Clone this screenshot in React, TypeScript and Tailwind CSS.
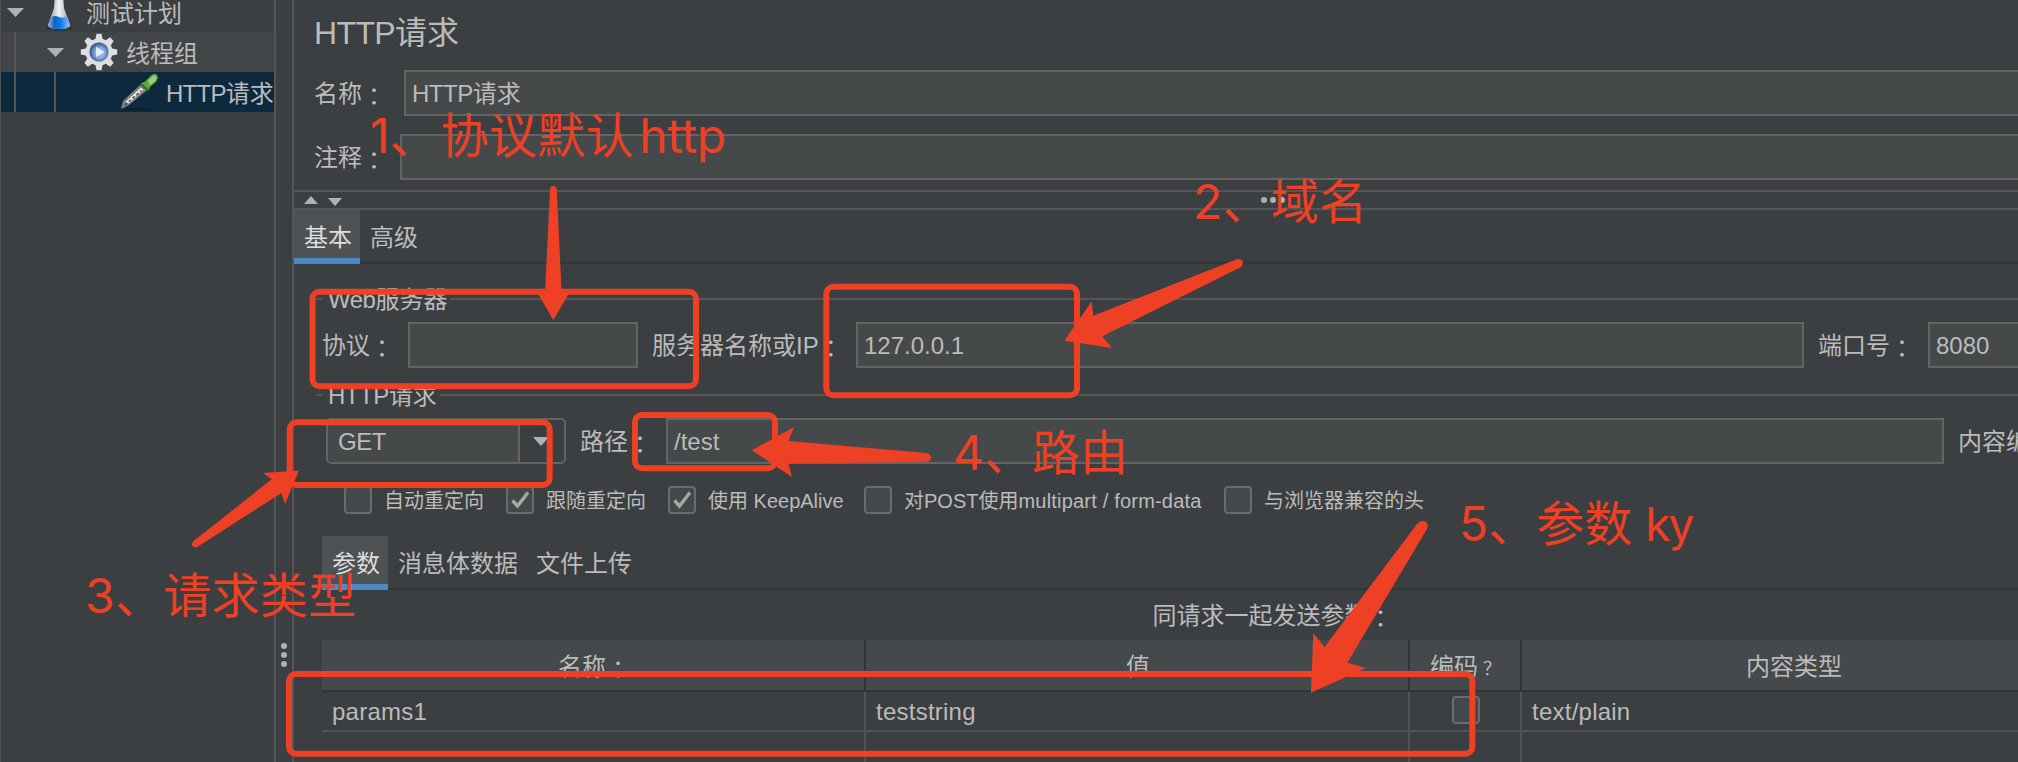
import type { ReactNode } from 'react';

const RED = '#ed4024';

function Colon() {
  return <span className="inline-block translate-x-[6px] translate-y-[2px]">：</span>;
}

function Latin({ children }: { children: ReactNode }) {
  return <span className="tracking-[-0.02em]">{children}</span>;
}

function Triangle({ up = false, className }: { up?: boolean; className: string }) {
  return (
    <svg viewBox="0 0 16 8" preserveAspectRatio="none" className={className}>
      <path d={up ? 'M8 0 16 8H0Z' : 'M0 0H16L8 8Z'} fill="#afb1b3" />
    </svg>
  );
}

function FlaskIcon() {
  return (
    <svg viewBox="0 0 28 36" className="h-9 w-7">
      <defs>
        <linearGradient id="glass" x1="0" x2="1">
          <stop offset="0" stopColor="#8c8f93" />
          <stop offset="0.5" stopColor="#f4f4f4" />
          <stop offset="1" stopColor="#999ba0" />
        </linearGradient>
        <linearGradient id="liquid" x1="0" x2="1">
          <stop offset="0" stopColor="#9db9e8" />
          <stop offset="0.3" stopColor="#0f62c8" />
          <stop offset="0.6" stopColor="#0a7df0" />
          <stop offset="1" stopColor="#9fbdf0" />
        </linearGradient>
      </defs>
      <ellipse cx="14" cy="34" rx="13.5" ry="1.8" fill="#2e3133" />
      <path d="M10 0H18L19 14L25 31Q25 35 14 35Q3 35 3 31L9 14Z" fill="url(#glass)" />
      <path d="M6.5 23Q10 21 14 23Q18 25 22 22L25 31Q25 35 14 35Q3 35 3 31Z" fill="url(#liquid)" />
    </svg>
  );
}

function GearIcon() {
  return (
    <svg viewBox="0 0 38 38" className="h-[38px] w-[38px]">
      <defs>
        <radialGradient id="gearCore" cx="0.55" cy="0.55" r="0.6">
          <stop offset="0" stopColor="#c9d8ec" />
          <stop offset="0.5" stopColor="#7f9fd0" />
          <stop offset="1" stopColor="#1c3f86" />
        </radialGradient>
      </defs>
      <g fill="#dedede">
        {[0, 45, 90, 135].map((a) => (
          <path key={a} d="M16.5 0.8H21.5L23 8V30L21.5 37.2H16.5L15 30V8Z" transform={`rotate(${a} 19 19)`} />
        ))}
        <circle cx="19" cy="19" r="13.5" />
      </g>
      <circle cx="19" cy="19" r="10.3" fill="#c9cdd4" />
      <circle cx="19" cy="19" r="9.5" fill="url(#gearCore)" />
      <path d="M16 13.5 24.5 19 16 24Z" fill="#eef2f8" fillOpacity="0.85" />
    </svg>
  );
}

function DropperIcon() {
  return (
    <svg viewBox="0 0 40 38" className="h-[38px] w-10">
      <ellipse cx="20" cy="36.5" rx="14" ry="1.5" fill="#0a2133" />
      <path d="M1 35 3 28 20 12 26 18 9 32 2.5 35.5Z" fill="#7f7f7f" />
      <path d="M5.5 29 21 14.5 23.5 17 8.5 30.5Z" fill="#ededed" />
      <path d="M5 32 21.5 17.5" stroke="#4b4b4b" strokeWidth="1.5" strokeDasharray="3 2" />
      <path d="M21 10 24.5 9 31 2.5Q35 0 37 2Q39 5 36 9L30 14 28.5 17.5 25 18 20.5 13Z" fill="#5fa544" />
      <path d="M28 7.5 33 3Q36 2 36.5 4.5Q36 8 33 9.5L30 12Z" fill="#93d47a" />
      <path d="M21 11 28 17.5" stroke="#2f6b25" strokeWidth="2" />
    </svg>
  );
}

function Input({ className, children }: { className: string; children?: ReactNode }) {
  return (
    <div className={`flex h-[46px] shrink-0 items-center border-2 border-[#646464] bg-[#45494a] pt-[2px] pl-[6px] ${className}`}>
      {children}
    </div>
  );
}

function Label({ className, children }: { className: string; children: ReactNode }) {
  return (
    <span className={`shrink-0 pt-[2px] ${className}`}>
      {children}
      <Colon />
    </span>
  );
}

function Box({ checked = false }: { checked?: boolean }) {
  return (
    <span className="flex size-7 shrink-0 items-center justify-center rounded-[4px] border-2 border-[#6b6b6b] bg-[#43494a]">
      {checked && (
        <svg viewBox="0 0 24 24" className="size-6">
          <path d="M4.5 12.5 9.5 18 20 4.5" fill="none" stroke="#a7a7a7" strokeWidth="3.4" />
        </svg>
      )}
    </span>
  );
}

function Option({ label, checked, className }: { label: ReactNode; checked?: boolean; className: string }) {
  return (
    <div className={`flex h-7 shrink-0 items-center gap-[12px] text-[20px] ${className}`}>
      <Box checked={checked} />
      <span className="pt-[2px] whitespace-nowrap">{label}</span>
    </div>
  );
}

function Tabs({ items, className }: { items: string[]; className: string }) {
  return (
    <div className={`flex h-[54px] shrink-0 items-stretch bg-[linear-gradient(#323537,#323537)] bg-[length:100%_2px] bg-bottom bg-no-repeat ${className}`}>
      {items.map((t, i) => (
        <div
          key={t}
          className={
            i === 0
              ? 'flex items-center border-b-[6px] border-[#4a88c7] bg-[#4e5254] pt-[8px] pr-[8px] pl-[10px] text-[#dedede]'
              : 'flex items-center pt-[2px] pr-[8px] pl-[10px]'
          }
        >
          {t}
        </div>
      ))}
    </div>
  );
}

function Group({ title, className, children }: { title: ReactNode; className: string; children: ReactNode }) {
  return (
    <section className={className}>
      <div className="flex h-7 items-center pl-[22px] whitespace-nowrap">
        <span className="mr-[6px] h-[2px] w-[6px] bg-[#555555]" />
        <span className="pt-[2px]">{title}</span>
        <span className="ml-[3px] h-[2px] flex-1 bg-[#555555]" />
      </div>
      {children}
    </section>
  );
}

function Dots({ className }: { className: string }) {
  return (
    <div className={`flex gap-[3px] ${className}`}>
      <span className="size-[6px] rounded-full bg-[#afb1b3]" />
      <span className="size-[6px] rounded-full bg-[#afb1b3]" />
      <span className="size-[6px] rounded-full bg-[#afb1b3]" />
    </div>
  );
}

function Sidebar() {
  return (
    <aside className="flex h-full w-[276px] shrink-0 flex-col overflow-hidden border-r-2 border-l border-r-[#555555] border-l-[#515151] whitespace-nowrap">
      <div className="-mt-2 flex h-10 shrink-0 items-center pl-[6px]">
        <Triangle className="h-[9px] w-[17px]" />
        <span className="ml-[21px]"><FlaskIcon /></span>
        <span className="mt-[3px] ml-[13px]">测试计划</span>
      </div>
      <div className="flex h-10 shrink-0 items-center bg-[#424547]">
        <span className="ml-[13px] h-10 w-[2px] bg-[#555555]" />
        <Triangle className="ml-[31px] h-[9px] w-[17px]" />
        <span className="ml-[16px]"><GearIcon /></span>
        <span className="ml-[8px] pt-[3px]">线程组</span>
      </div>
      <div className="flex h-10 shrink-0 items-center bg-[#0d293e]">
        <span className="ml-[13px] h-10 w-[2px] bg-[#555555]" />
        <span className="ml-[38px] h-10 w-[2px] bg-[#555555]" />
        <span className="ml-[64px]"><DropperIcon /></span>
        <span className="ml-[6px] pt-[3px]"><span className="tracking-[-0.03em]">HTTP</span>请求</span>
      </div>
    </aside>
  );
}

function ParamTable() {
  const head = 'flex items-center justify-center border-r-2 border-[#323537] pt-[4px] pl-[2px]';
  const cell = 'flex items-center border-r-2 border-[#4f5254] pt-[2px] pl-[10px] tracking-[0.01em]';
  const cols = 'grid shrink-0 grid-cols-[544px_544px_112px_544px]';
  return (
    <div className="ml-[26px] flex w-[1744px] flex-1 flex-col">
      <div className={`${cols} h-[52px] border-b-2 border-[#323537] bg-[#45494b]`}>
        <div className={head}><span>名称<Colon /></span></div>
        <div className={head}>值</div>
        <div className={head}>
          编码<span className="w-6 pt-[4px] pl-[4px] text-center text-[18px]">？</span>
        </div>
        <div className={head}>内容类型</div>
      </div>
      <div className={`${cols} h-10 border-b-2 border-[#4f5254]`}>
        <div className={cell}>params1</div>
        <div className={cell}>teststring</div>
        <div className="flex items-center justify-center border-r-2 border-[#4f5254] pb-[2px] pl-[2px]"><Box /></div>
        <div className={cell}>text/plain</div>
      </div>
      <div className={`${cols} h-[30px]`}>
        <div className={cell} />
        <div className={cell} />
        <div className={cell} />
        <div className={cell} />
      </div>
    </div>
  );
}

function RequestPanel() {
  return (
    <main className="flex h-full min-w-0 flex-1 flex-col overflow-hidden border-l-2 border-[#555555] whitespace-nowrap">
      <h1 className="flex h-[70px] shrink-0 items-center pb-[4px] pl-5 text-[32px]">
        <Latin>HTTP</Latin>请求
      </h1>
      <div className="flex shrink-0 items-center pl-5">
        <Label className="w-[90px]">名称</Label>
        <Input className="w-[1700px]"><span><Latin>HTTP</Latin>请求</span></Input>
      </div>
      <div className="mt-[18px] flex shrink-0 items-center pl-5">
        <Label className="w-[86px]">注释</Label>
        <Input className="w-[1700px]" />
      </div>
      <div className="mt-[10px] flex h-5 shrink-0 items-center border-y-2 border-[#555555] pl-[10px]">
        <Triangle up className="h-2 w-[14px]" />
        <Triangle className="mt-1 ml-[10px] h-2 w-[14px]" />
        <Dots className="ml-[919px]" />
      </div>
      <Tabs items={['基本', '高级']} className="" />
      <Group title={<><Latin>Web</Latin>服务器</>} className="mt-[21px] shrink-0">
        <div className="mt-[9px] flex items-center pl-[28px]">
          <Label className="w-[86px]">协议</Label>
          <Input className="w-[230px]" />
          <Label className="ml-[14px] w-[204px]">服务器名称或IP</Label>
          <Input className="w-[948px]">127.0.0.1</Input>
          <Label className="ml-[14px] w-[110px]">端口号</Label>
          <Input className="w-[200px]">8080</Input>
        </div>
      </Group>
      <Group title={<><Latin>HTTP</Latin>请求</>} className="mt-[13px] shrink-0">
        <div className="mt-[9px] flex items-center pl-8">
          <div className="flex h-[46px] w-60 shrink-0 items-stretch overflow-hidden rounded-[5px] border-2 border-[#646464]">
            <div className="flex w-[192px] items-center border-r-2 border-[#646464] bg-[#45494a] pt-[2px] pl-[10px]"><Latin>GET</Latin></div>
            <div className="flex items-center pl-[13px]"><Triangle className="h-[9px] w-4" /></div>
          </div>
          <Label className="ml-[14px] w-[86px]">路径</Label>
          <Input className="w-[1278px]">/test</Input>
          <Label className="ml-[14px]">内容编码</Label>
        </div>
      </Group>
      <div className="mt-[22px] flex shrink-0 pl-[50px]">
        <Option label="自动重定向" className="w-[162px]" />
        <Option label="跟随重定向" checked className="w-[162px]" />
        <Option label="使用 KeepAlive" checked className="w-[196px]" />
        <Option label={<>对POST使用<span className="tracking-[0.01em]">multipart / form-data</span></>} className="w-[360px]" />
        <Option label="与浏览器兼容的头" className="w-[200px]" />
      </div>
      <Tabs items={['参数', '消息体数据', '文件上传']} className="mt-[22px] ml-7" />
      <div className="flex h-[50px] w-[1957px] shrink-0 items-center justify-center pt-[2px]">
        <span>同请求一起发送参数<Colon /></span>
      </div>
      <div className="flex flex-1 pl-[2px]"><ParamTable /></div>
    </main>
  );
}

function Note({ className, children }: { className: string; children: ReactNode }) {
  return (
    <div className={`absolute font-['Inter','Noto_Sans_CJK_SC',sans-serif] text-[48px] leading-[60px] whitespace-nowrap text-[#ed4024] ${className}`}>
      {children}
    </div>
  );
}

const frames = [
  { x: 312.5, y: 291.8, w: 383.5, h: 94.5 },
  { x: 826.3, y: 286.7, w: 250.7, h: 108.6 },
  { x: 289.7, y: 422.3, w: 260, h: 62.7 },
  { x: 635, y: 415, w: 140, h: 53.3 },
  { x: 289, y: 674, w: 1183.3, h: 79.7 },
];

const arrows = [
  'M553.3 320 535.8 290 545 294 550 189Q550.3 186 553.3 186Q556.3 186 556.7 189L561.7 294 571 290Z',
  'M1064.3 340.7 1091.7 301.3 1093.3 315.7 1235 260Q1240 257.5 1242.5 261Q1244 265 1240 267.5L1102.3 336.2 1111.8 348Z',
  'M299 470.5 263 473 271.7 479.3 193 541.5Q191 544.5 193 546.5Q195.5 548.5 198 546.5L281.5 493 285 504Z',
  'M751.7 450.3 794 427 788.5 441 926 453Q931 454 931 458Q930.5 461.5 926 462L788.5 463.5 792 477Z',
  'M1311 692.7 1313.3 633 1324.5 647 1417 524Q1421 519.5 1426 522Q1429 525 1427 529L1347.3 662.7 1366 668Z',
];

function Annotations() {
  return (
    <div className="pointer-events-none absolute inset-0">
      <svg viewBox="0 0 2018 762" className="absolute inset-0 h-full w-full">
        {frames.map((f) => (
          <rect key={f.x} x={f.x} y={f.y} width={f.w} height={f.h} rx="7" fill="none" stroke={RED} strokeWidth="6" />
        ))}
        {arrows.map((d) => (
          <path key={d} d={d} fill={RED} />
        ))}
      </svg>
      <Note className="top-[106px] left-[370px]">
        1、<span className="ml-[3px] tracking-[0.4px]">协议默认</span><span className="ml-[5px] tracking-[-0.3px]">http</span>
      </Note>
      <Note className="top-[172px] left-[1193px] tracking-[0.3px]">2、域名</Note>
      <Note className="top-[566px] left-[85px] tracking-[0.3px]">3、请求类型</Note>
      <Note className="top-[423px] left-[953px]">4、路由</Note>
      <Note className="top-[494px] left-[1459px]">5、参数<span className="ml-[13px] text-[46px] tracking-[-2px]">ky</span></Note>
    </div>
  );
}

export default function App() {
  return (
    <div className="relative flex h-[762px] w-[2018px] overflow-hidden bg-[#3c3f41] font-['Liberation_Sans','Noto_Sans_CJK_SC',sans-serif] text-[24px] leading-7 text-[#bbbbbb]">
      <Sidebar />
      <div className="flex w-4 shrink-0 flex-col items-center justify-end pb-[95px]">
        <Dots className="flex-col" />
      </div>
      <RequestPanel />
      <Annotations />
    </div>
  );
}
